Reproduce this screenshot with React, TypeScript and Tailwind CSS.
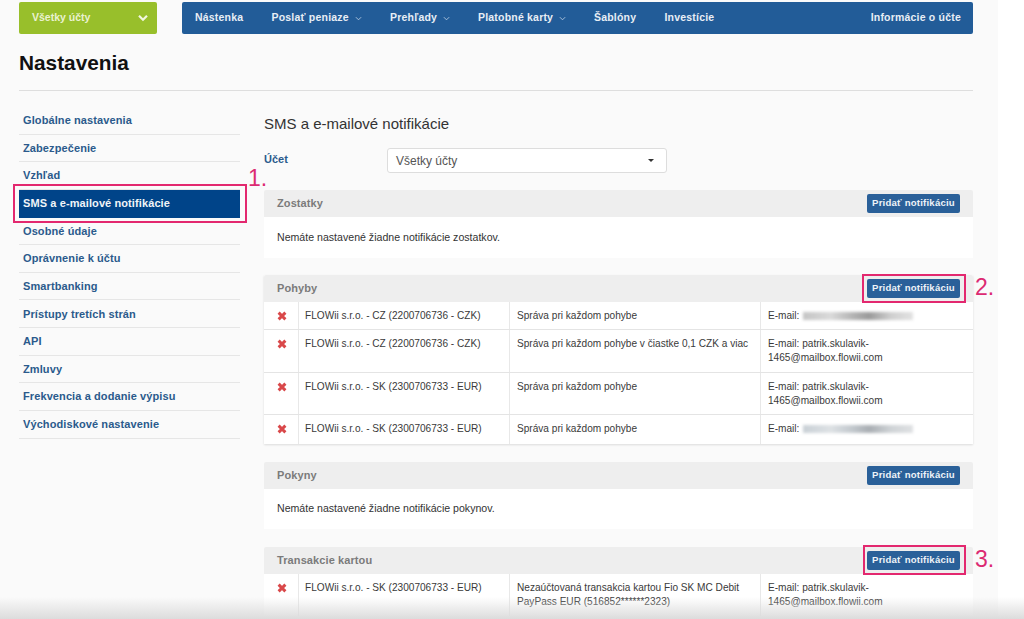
import React from "react";

const sideItems = [
  "Globálne nastavenia",
  "Zabezpečenie",
  "Vzhľad",
  "SMS a e-mailové notifikácie",
  "Osobné údaje",
  "Oprávnenie k účtu",
  "Smartbanking",
  "Prístupy tretích strán",
  "API",
  "Zmluvy",
  "Frekvencia a dodanie výpisu",
  "Východiskové nastavenie",
];

function Chevron() {
  return (
    <svg width="7" height="5" viewBox="0 0 8 5" className="ml-[6px] mt-[1px]" fill="none" stroke="#b9cde2" strokeWidth="1">
      <path d="M1 1l3 3 3-3" />
    </svg>
  );
}

function NavItem({ label, caret, className }: { label: string; caret?: boolean; className: string }) {
  return (
    <div className={`flex items-center text-[10.5px] font-bold text-[#e8eef5] tracking-[0.2px] ${className}`}>
      {label}
      {caret && <Chevron />}
    </div>
  );
}

function AddButton() {
  return (
    <button className="h-[19px] w-[93px] rounded-[2px] bg-[#2a6099] text-[9.6px] font-bold tracking-[0.2px] text-[#eef3f8]">
      Pridať notifikáciu
    </button>
  );
}

function PanelHeader({ title }: { title: string }) {
  return (
    <div className="flex h-[27px] items-center justify-between rounded-t-[2px] bg-[#eeeeee] px-[13px]">
      <span className="text-[11px] font-bold tracking-[0.1px] text-[#7b7b7b]">{title}</span>
      <AddButton />
    </div>
  );
}

function Cross() {
  return (
    <svg width="10" height="10" viewBox="0 0 10 10" className="mt-[2px]">
      <path d="M1.6 1.6L8.4 8.4M8.4 1.6L1.6 8.4" stroke="#d9484a" strokeWidth="2.9" />
    </svg>
  );
}

function Blurred({ tone }: { tone: string }) {
  return <span className={`ml-[4px] inline-block h-[8px] w-[110px] align-middle blur-[1.8px] ${tone}`} />;
}

function Row({ h, account, msg, mail, last }: { h: string; account: string; msg: string; mail: React.ReactNode; last?: boolean }) {
  return (
    <div className={`grid grid-cols-[35px_211px_251px_1fr] text-[10.1px] leading-[14px] text-[#3a3a3a] ${h} ${last ? "" : "border-b border-[#e4e4e4]"}`}>
      <div className="border-r border-[#e8e8e8] pl-[13px] pt-[7px]"><Cross /></div>
      <div className="border-r border-[#e8e8e8] pl-[6px] pt-[7px]">{account}</div>
      <div className="border-r border-[#e8e8e8] pl-[7px] pr-[4px] pt-[7px]">{msg}</div>
      <div className="pl-[7px] pr-[40px] pt-[7px]">{mail}</div>
    </div>
  );
}

const longMail = <>E-mail: patrik.skulavik-1465@mailbox.flowii.com</>;
const cz = "FLOWii s.r.o. - CZ (2200706736 - CZK)";
const sk = "FLOWii s.r.o. - SK (2300706733 - EUR)";

function Num({ n, className }: { n: string; className: string }) {
  return <span className={`absolute text-[23px] leading-none text-[#dc2a72] ${className}`}>{n}</span>;
}

function PinkBox({ className }: { className: string }) {
  return <div className={`pointer-events-none absolute border-[2px] border-[#e3286f] ${className}`} />;
}

export default function App() {
  return (
    <div className="relative h-[619px] w-[1024px] overflow-hidden bg-white font-['Liberation_Sans',Arial,sans-serif]">
      <div className="relative h-full w-[998px] bg-[#fafafa] pl-[19px] pr-[25px] pt-[2px]">
        <header className="flex h-[32px] gap-[25px]">
          <div className="flex w-[138px] items-center justify-between rounded-[2px] bg-[#98bf2b] pl-[13px] pr-[9px]">
            <span className="text-[10.5px] font-bold text-[#eaf2d0]">Všetky účty</span>
            <svg width="10" height="8" viewBox="0 0 10 8" fill="none" stroke="#f2f7e0" strokeWidth="2.2">
              <path d="M1 1.8l4 4 4-4" />
            </svg>
          </div>
          <nav className="flex flex-1 items-center rounded-[2px] bg-[#225c98] px-[12px]">
            <NavItem label="Nástenka" className="ml-[1px] w-[76.5px]" />
            <NavItem label="Poslať peniaze" caret className="w-[118.5px]" />
            <NavItem label="Prehľady" caret className="w-[88px]" />
            <NavItem label="Platobné karty" caret className="w-[116px]" />
            <NavItem label="Šablóny" className="w-[70.5px]" />
            <NavItem label="Investície" />
            <NavItem label="Informácie o účte" className="ml-auto" />
          </nav>
        </header>

        <h1 className="mt-[15px] h-[27px] text-[20.8px] font-bold leading-[27px] text-[#111111]">Nastavenia</h1>
        <div className="mt-[14px] h-[1px] bg-[#dedede]" />

        <div className="mt-[16px] flex gap-[24px]">
          <aside className="w-[221px] shrink-0">
            {sideItems.map((item, i) => (
              <div
                key={item}
                className={`flex h-[27.65px] items-center pl-[4px] text-[11px] font-bold tracking-[0.1px] ${
                  i === 3 ? "bg-[#004489] text-[#f0f4f8]" : "border-b border-[#e6e6e6] text-[#2b5a8c]"
                }`}
              >
                {item}
              </div>
            ))}
          </aside>

          <main className="flex-1 pt-[8px]">
            <h2 className="h-[18px] text-[15px] leading-[18px] text-[#333333]">SMS a e-mailové notifikácie</h2>
            <div className="mt-[15px] flex h-[25px]">
              <label className="w-[123px] pt-[3px] text-[11px] font-bold text-[#2b5a8c]">Účet</label>
              <div className="flex w-[280px] items-center justify-between rounded-[3px] border border-[#dddddd] bg-white pl-[8px] pr-[12px] text-[12px] text-[#555555]">
                Všetky účty
                <span className="h-0 w-0 border-x-[3px] border-t-[3px] border-x-transparent border-t-[#333333]" />
              </div>
            </div>

            <section className="mt-[17px]">
              <PanelHeader title="Zostatky" />
              <div className="flex h-[41px] items-center bg-white pl-[13px] text-[10.6px] text-[#333333]">
                Nemáte nastavené žiadne notifikácie zostatkov.
              </div>
            </section>

            <section className="mt-[17px] shadow-[0_1px_2px_rgba(0,0,0,0.12)]">
              <PanelHeader title="Pohyby" />
              <div className="bg-white">
                <Row h="h-[28px]" account={cz} msg="Správa pri každom pohybe" mail={<>E-mail:<Blurred tone="bg-[linear-gradient(90deg,#c4c4c4,#dadada_25%,#b4b4b4_45%,#9a9a9a_60%,#cfcfcf_80%,#e2e2e2)]" /></>} />
                <Row h="h-[43px]" account={cz} msg="Správa pri každom pohybe v čiastke 0,1 CZK a viac" mail={longMail} />
                <Row h="h-[42px]" account={sk} msg="Správa pri každom pohybe" mail={longMail} />
                <Row h="h-[29px]" account={sk} msg="Správa pri každom pohybe" mail={<>E-mail:<Blurred tone="bg-[linear-gradient(90deg,#c9d0d6,#dde1e4_25%,#c2c8cd_45%,#a9aeb3_60%,#cfd3d6_80%,#dfe1e3)]" /></>} last />
              </div>
            </section>

            <section className="mt-[18px]">
              <PanelHeader title="Pokyny" />
              <div className="flex h-[40px] items-center bg-white pl-[13px] text-[10.6px] text-[#333333]">
                Nemáte nastavené žiadne notifikácie pokynov.
              </div>
            </section>

            <section className="mt-[18px]">
              <PanelHeader title="Transakcie kartou" />
              <div className="bg-white">
                <Row
                  h="h-[42px]"
                  account={sk}
                  msg="Nezaúčtovaná transakcia kartou Fio SK MC Debit PayPass EUR (516852******2323)"
                  mail={longMail}
                  last
                />
              </div>
            </section>
          </main>
        </div>

        <PinkBox className="left-[13px] top-[184px] h-[39px] w-[234px]" />
        <PinkBox className="left-[862px] top-[274px] h-[29px] w-[104px]" />
        <PinkBox className="left-[863px] top-[545px] h-[30px] w-[103px]" />
        <Num n="1." className="left-[248px] top-[167px]" />
        <Num n="2." className="left-[975px] top-[276px]" />
        <Num n="3." className="left-[975px] top-[548px]" />
      </div>
      <div className="pointer-events-none absolute bottom-0 left-0 h-[22px] w-full bg-gradient-to-b from-transparent to-[#dcdcdc]" />
    </div>
  );
}
